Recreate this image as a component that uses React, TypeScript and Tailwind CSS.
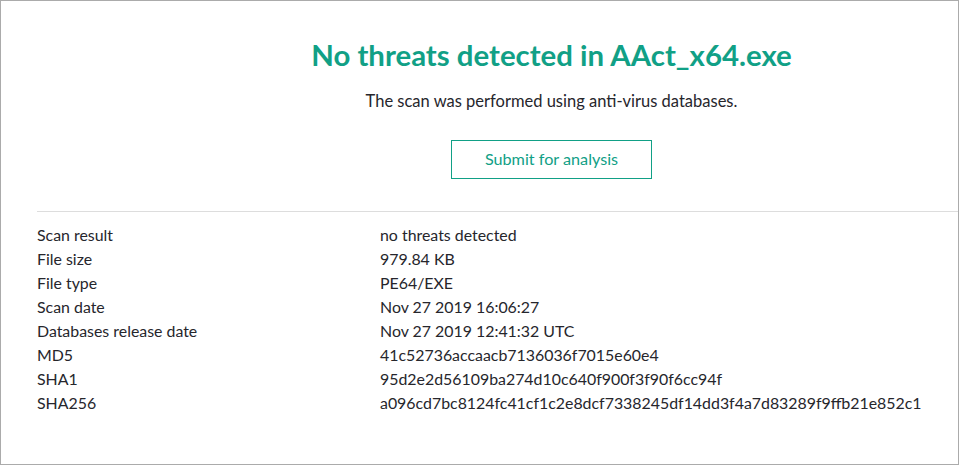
const rows: [string, string][] = [
  ['Scan result', 'no threats detected'],
  ['File size', '979.84 KB'],
  ['File type', 'PE64/EXE'],
  ['Scan date', 'Nov 27 2019 16:06:27'],
  ['Databases release date', 'Nov 27 2019 12:41:32 UTC'],
  ['MD5', '41c52736accaacb7136036f7015e60e4'],
  ['SHA1', '95d2e2d56109ba274d10c640f900f3f90f6cc94f'],
  ['SHA256', 'a096cd7bc8124fc41cf1c2e8dcf7338245df14dd3f4a7d83289f9ffb21e852c1'],
]

export default function App() {
  return (
    <div className="h-[465px] w-[959px] border border-[#ababab] bg-white font-['Lato',sans-serif] text-[#26262c]">
      <div className="flex flex-col items-center pl-[144px] pt-[34px]">
        <h1 className="text-[29.4px] font-bold leading-[40px] text-[#11a086]">No threats detected in AAct_x64.exe</h1>
        <p className="mt-[16px] text-[16.5px] leading-[20px]">The scan was performed using anti-virus databases.</p>
        <button className="mt-[29px] h-[39px] w-[201px] border border-[#11a086] text-[16.2px] text-[#11a086]" type="button">
          Submit for analysis
        </button>
      </div>
      <div className="ml-[36px] mt-[32px] border-t border-[#dddddd] pt-[11px]">
        {rows.map(([label, value]) => (
          <div key={label} className="flex text-[15.9px] leading-[24px]">
            <div className="w-[343px]">{label}</div>
            <div>{value}</div>
          </div>
        ))}
      </div>
    </div>
  )
}
